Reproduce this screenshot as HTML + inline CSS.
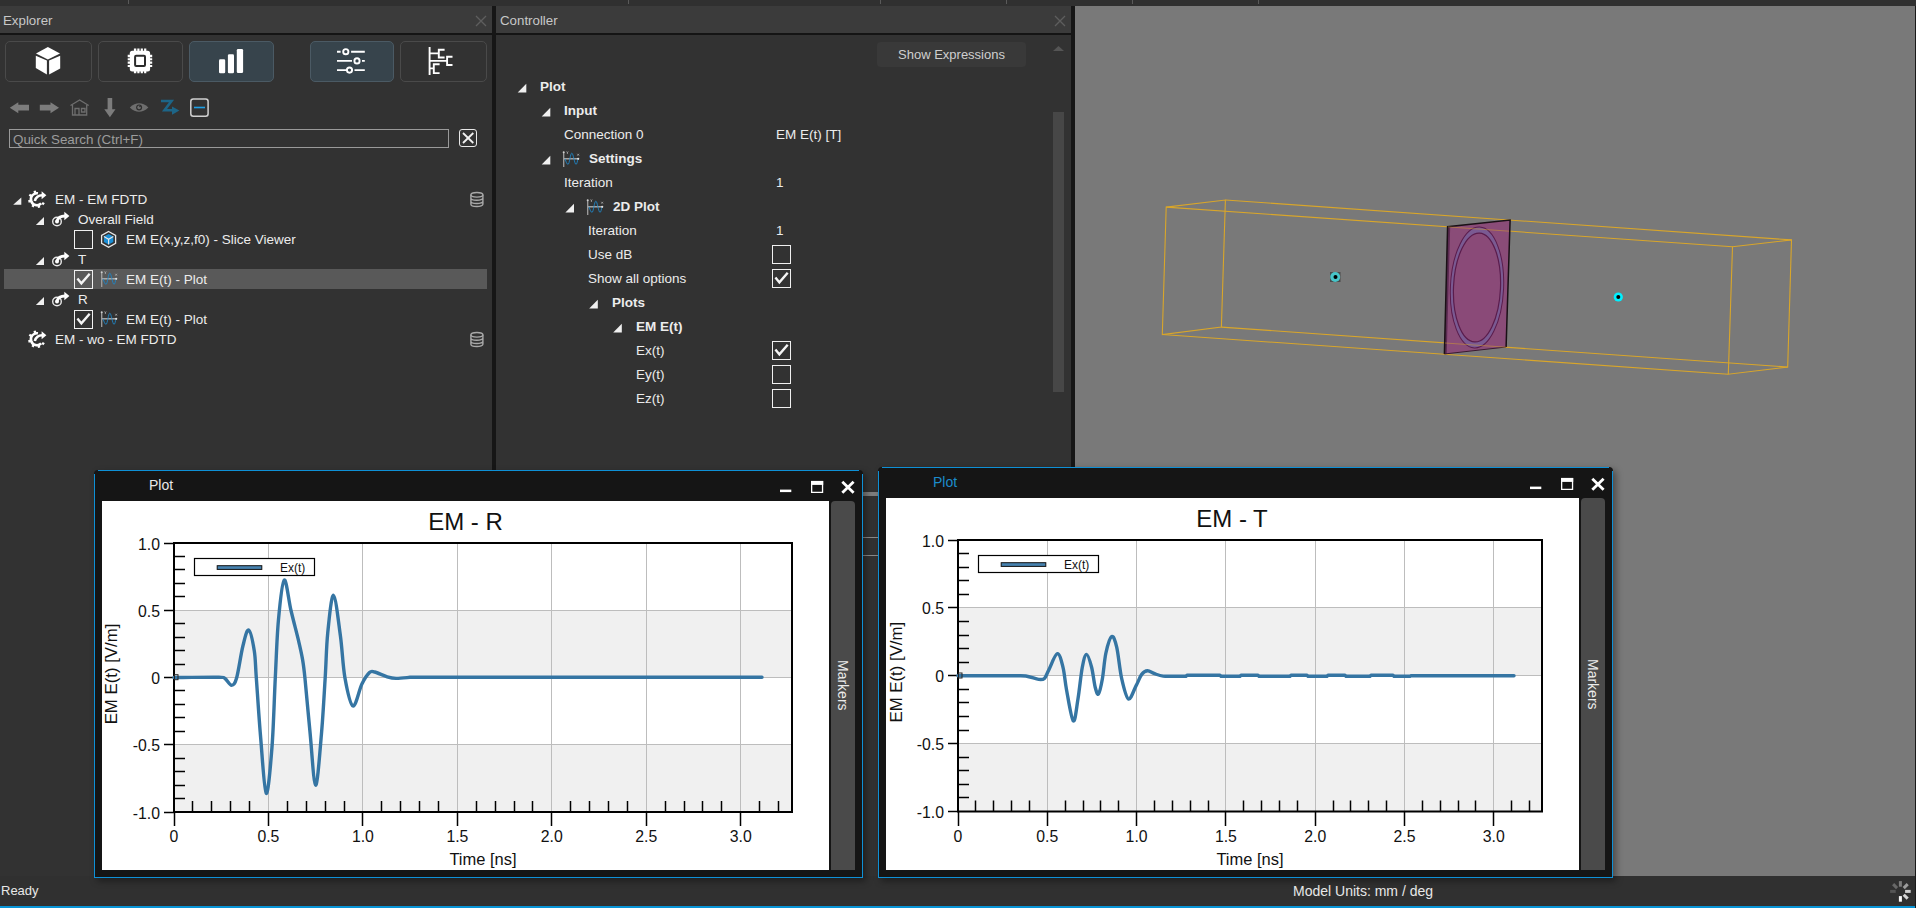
<!DOCTYPE html>
<html><head><meta charset="utf-8">
<style>
*{margin:0;padding:0;box-sizing:border-box}
html,body{width:1916px;height:908px;overflow:hidden;background:#323232;font-family:"Liberation Sans",sans-serif;color:#ececec;font-size:13px}
.a{position:absolute}
svg.a{display:block}
#top{left:0;top:0;width:1916px;height:6px;background:#303030}
.hdr{top:6px;height:27px;background:#3b3b3b;color:#c8c8c8;font-size:13.3px;line-height:30px}
.hline{top:33px;height:2px;background:#141414}
.sep{background:#161616}
.t{white-space:nowrap;line-height:20px;height:20px}
.tb{font-weight:bold}
.cb{width:19px;height:19px;border:1.5px solid #f0f0f0}
.btn{top:41px;height:41px;border:1px solid #4a4a4a;border-radius:5px}
.btn.sel{background:#37444c;border-color:#4b5a64}
#vp{left:1075px;top:6px;width:840px;height:870px;background:#797979}
#status{left:0;top:876px;width:1916px;height:30px;background:#303030}
#sline{left:0;top:906px;width:1916px;height:2px;background:#0894d6}
.win{background:#151515;border-radius:4px 4px 0 0;box-shadow:3px 3px 7px rgba(0,0,0,0.4)}
.bl{background:#0e90d6}
.mk{background:#4a4a4a;border-radius:4px 4px 0 0}
.ct{white-space:nowrap;line-height:24px;height:24px;font-size:13.5px}
</style></head><body>

<div class="a" id="top"></div>
<div class="a" style="left:128px;top:0;width:1px;height:4px;background:#5a5a5a"></div><div class="a" style="left:628px;top:0;width:1px;height:4px;background:#5a5a5a"></div><div class="a" style="left:880px;top:0;width:1px;height:4px;background:#5a5a5a"></div><div class="a" style="left:1006px;top:0;width:1px;height:4px;background:#5a5a5a"></div><div class="a" style="left:1132px;top:0;width:1px;height:4px;background:#5a5a5a"></div><div class="a" style="left:1258px;top:0;width:1px;height:4px;background:#5a5a5a"></div>
<div class="a" id="vp"></div>
<svg class="a" style="left:1075px;top:6px" width="840" height="470" viewBox="1075 6 840 470">
<g stroke="#d9a62a" stroke-width="1.1" fill="none">
<path d="M1166.2,207.1L1225.4,200L1221.4,327.1L1162.3,334.5Z"/>
<path d="M1732.5,246.8L1791.5,239.9L1787.7,367.1L1728.3,374.2Z"/>
<path d="M1166.2,207.1L1732.5,246.8M1225.4,200L1791.5,239.9M1221.4,327.1L1787.7,367.1M1162.3,334.5L1728.3,374.2"/>
</g>
<path d="M1447.6,226.7L1510.1,220L1506.1,347L1444.4,354Z" fill="#8a4a78" fill-opacity="0.97"/>
<path d="M1447.6,226.7L1450.2,226.7L1446.7,354L1444.4,354Z" fill="#5a2a50"/>
<g transform="rotate(2.5 1477 287.5)">
<ellipse cx="1477" cy="287.5" rx="26.6" ry="60.5" fill="#7a5a92" stroke="#5a1c4c" stroke-width="1"/>
<ellipse cx="1477" cy="287.5" rx="23.5" ry="54.5" fill="#8a4a78" stroke="#5a1c4c" stroke-width="1.2"/>
</g>
<path d="M1444.4,354L1447.6,226.7L1510.1,220L1506.1,347" fill="none" stroke="#1a1016" stroke-width="1.5"/>
<path d="M1444.4,354L1506.1,347" fill="none" stroke="#3a1a30" stroke-width="1"/>
<g stroke="#d9a62a" stroke-width="1" stroke-opacity="0.45" fill="none">
<path d="M1448,226.9L1509,231.2M1445,343L1506,347.2"/>
</g>
<rect x="1330" y="272" width="10.5" height="10" fill="#4a4a4a"/>
<circle cx="1335.2" cy="277" r="5" fill="#48c4c8"/>
<circle cx="1335.5" cy="277" r="2" fill="#000"/>
<circle cx="1618.3" cy="297" r="4.6" fill="#00f0ff"/>
<circle cx="1618.3" cy="297" r="2" fill="#000"/>
</svg>

<!-- Explorer -->
<div class="a hdr" style="left:0;width:492px;padding-left:3px">Explorer</div>
<div class="a hline" style="left:0;width:492px"></div>
<div class="a sep" style="left:492px;top:6px;width:4px;height:464px"></div>

<div class="a btn" style="left:5px;width:87px"></div>
<div class="a btn" style="left:98px;width:85px"></div>
<div class="a btn sel" style="left:189px;width:85px"></div>
<div class="a btn sel" style="left:310px;width:84px"></div>
<div class="a btn" style="left:400px;width:87px"></div>

<div class="a" style="left:9px;top:129px;width:440px;height:19px;border:1px solid #9a9a9a"></div>
<div class="a" style="left:13px;top:130px;font-size:13.4px;color:#9c9c9c;line-height:19px">Quick Search (Ctrl+F)</div>
<div class="a" style="left:459px;top:129px;width:18px;height:18px;border:1.5px solid #e8e8e8;border-radius:3px"></div>

<div class="a" style="left:4px;top:269px;width:483px;height:20px;background:#595959"></div>

<div class="a t" style="left:55px;top:190px;font-size:13.5px">EM - EM FDTD</div>
<div class="a t" style="left:78px;top:210px;font-size:13.5px">Overall Field</div>
<div class="a t" style="left:126px;top:230px;font-size:13.5px">EM E(x,y,z,f0) - Slice Viewer</div>
<div class="a t" style="left:78px;top:250px;font-size:13.5px">T</div>
<div class="a t" style="left:126px;top:270px;font-size:13.5px">EM E(t) - Plot</div>
<div class="a t" style="left:78px;top:290px;font-size:13.5px">R</div>
<div class="a t" style="left:126px;top:310px;font-size:13.5px">EM E(t) - Plot</div>
<div class="a t" style="left:55px;top:330px;font-size:13.5px">EM - wo - EM FDTD</div>

<div class="a cb" style="left:74px;top:230px"></div>
<div class="a cb" style="left:74px;top:270px"></div>
<div class="a cb" style="left:74px;top:310px"></div>

<!-- Controller -->
<div class="a hdr" style="left:496px;width:575px;padding-left:4px">Controller</div>
<div class="a hline" style="left:496px;width:575px"></div>
<div class="a sep" style="left:1071px;top:6px;width:4px;height:464px"></div>

<div class="a" style="left:877px;top:42px;width:149px;height:25px;background:#393939;border-radius:4px;color:#cfcfcf;font-size:13px;line-height:25px;text-align:center">Show Expressions</div>
<div class="a" style="left:1053px;top:112px;width:11px;height:280px;background:#474747"></div>

<div class="a ct tb" style="left:540px;top:75px">Plot</div>
<div class="a ct tb" style="left:564px;top:99px">Input</div>
<div class="a ct" style="left:564px;top:123px">Connection 0</div>
<div class="a ct" style="left:776px;top:123px">EM E(t) [T]</div>
<div class="a ct tb" style="left:589px;top:147px">Settings</div>
<div class="a ct" style="left:564px;top:171px">Iteration</div>
<div class="a ct" style="left:776px;top:171px">1</div>
<div class="a ct tb" style="left:613px;top:195px">2D Plot</div>
<div class="a ct" style="left:588px;top:219px">Iteration</div>
<div class="a ct" style="left:776px;top:219px">1</div>
<div class="a ct" style="left:588px;top:243px">Use dB</div>
<div class="a ct" style="left:588px;top:267px">Show all options</div>
<div class="a ct tb" style="left:612px;top:291px">Plots</div>
<div class="a ct tb" style="left:636px;top:315px">EM E(t)</div>
<div class="a ct" style="left:636px;top:339px">Ex(t)</div>
<div class="a ct" style="left:636px;top:363px">Ey(t)</div>
<div class="a ct" style="left:636px;top:387px">Ez(t)</div>
<div class="a cb" style="left:772px;top:245px"></div>
<div class="a cb" style="left:772px;top:269px"></div>
<div class="a cb" style="left:772px;top:341px"></div>
<div class="a cb" style="left:772px;top:365px"></div>
<div class="a cb" style="left:772px;top:389px"></div>

<svg class="a" style="left:0;top:0" width="1916" height="470" viewBox="0 0 1916 470">
<!-- header close X -->
<g stroke="#5e5e5e" stroke-width="1.3"><path d="M476,16L486,26M486,16L476,26"/><path d="M1055,16L1065,26M1065,16L1055,26"/></g>
<!-- cube -->
<g fill="#fff">
<path d="M47.9,47 L60,53.6 L47.9,59.4 L36,53.6Z"/>
<path d="M35.8,55.8 L46.9,60.4 L46.9,74.4 L35.8,68.1Z"/>
<path d="M49.1,60.4 L60.2,55.8 L60.2,68.6 L49.1,74.4Z"/>
</g>
<!-- chip -->
<g fill="#fff">
<rect x="129.8" y="50.7" width="20.3" height="20.8" rx="2.5"/>
<path d="M133.9,48.5h2.4v3h-2.4zM137.3,48.5h2.2v3h-2.2zM140.7,48.5h2.2v3h-2.2zM144.1,48.5h2.2v3h-2.2z"/>
<path d="M133.9,70.5h2.4v2.8h-2.4zM137.3,70.5h2.2v2.8h-2.2zM140.7,70.5h2.2v2.8h-2.2zM144.1,70.5h2.2v2.8h-2.2z"/>
<path d="M127.7,54.8h3v2.4h-3zM127.7,58.2h3v2.1h-3zM127.7,61.6h3v2.1h-3zM127.7,65h3v2.1h-3z"/>
<path d="M149.5,54.8h2.7v2.4h-2.7zM149.5,58.2h2.7v2.1h-2.7zM149.5,61.6h2.7v2.1h-2.7zM149.5,65h2.7v2.1h-2.7z"/>
</g>
<rect x="135.1" y="55.8" width="9.9" height="10.1" rx="1" fill="#fff" stroke="#2b2b2b" stroke-width="2"/>
<!-- bars -->
<g fill="#fff"><rect x="219" y="59.2" width="6.2" height="14" rx="1.3"/><rect x="227.9" y="54.2" width="6.1" height="19" rx="1.3"/><rect x="236.8" y="48.9" width="6.3" height="24.2" rx="1.3"/></g>
<!-- sliders -->
<g stroke="#fff" stroke-width="1.9" fill="none">
<path d="M337,51.7h3.6M351.1,51.7h13.7M337,60.9h15M362,60.9h2.8M337,70.1h10M354.5,70.1h10.3"/>
<circle cx="345.8" cy="51.7" r="2.6"/><circle cx="357" cy="60.9" r="2.6"/><circle cx="349.5" cy="70.1" r="2.6"/>
</g>
<!-- tree icon -->
<g stroke="#fff" stroke-width="1.9" fill="none">
<path d="M429.6,47V75.1M430,53.4h8.8M444.6,49.7h-5.8v7.8h5.8M430,60.9h17.1M452.5,56.7h-5.4v8.3h5.4M430,68.4h3.8M439.6,64.2h-5.8v8.9h5.8"/>
</g>
<!-- nav icons -->
<g fill="#7c7c7c">
<path d="M9.8,107.7L18.3,102.2V104.8H29V110.5H18.3V113.3Z"/>
<path d="M59,107.7L50.5,102.2V104.8H39.8V110.5H50.5V113.3Z"/>
<path d="M107.6,98H112.2V109.3H115.5L109.9,117.2L104.3,109.3H107.6Z"/>
</g>
<g fill="none" stroke="#6e6e6e" stroke-width="1.3">
<path d="M70.5,105.5L79.6,100L88.7,105.5M72.5,105V115H86.7V105"/>
<path d="M75,115V108.5H79V115M81.5,108.5H85V112H81.5Z"/>
</g>
<path d="M129.8,107.4Q139,99 148.4,107.4Q139,116 129.8,107.4Z" fill="#6e6e6e"/>
<circle cx="139.1" cy="107.4" r="3" fill="#2e2e2e"/><circle cx="139.1" cy="107.4" r="1.8" fill="#6e6e6e"/><circle cx="140" cy="106.4" r="0.8" fill="#2e2e2e"/>
<path d="M161,101H171.5L164.5,110.3H172.5" fill="none" stroke="#1d6587" stroke-width="2.6"/>
<path d="M172,106.5L179.4,110.6L172,114.8Z" fill="#1d6587"/>
<rect x="190.8" y="99" width="17.3" height="17.2" rx="2.5" fill="none" stroke="#d0d0d0" stroke-width="1.5"/>
<path d="M194,107.5H205" stroke="#1ea0e6" stroke-width="1.6"/>
<!-- clear X -->
<path d="M463,133L473.3,143M473.3,133L463,143" stroke="#f0f0f0" stroke-width="1.8"/>
<!-- tree triangles -->
<g fill="#f0f0f0">
<path d="M13.2,204.8H21.3V197.5Z"/>
<path d="M35.9,225H44V216.9Z"/>
<path d="M35.9,265H44V256.9Z"/>
<path d="M35.9,305H44V296.9Z"/>
</g>
<!-- gear-arrow icons -->
<g id="gearA">
<path d="M37.94,193.29A6,6 0 1 0 41.14,203.44" fill="none" stroke="#fff" stroke-width="2.6"/>
<g fill="#fff"><rect x="33.73" y="190.66" width="2.4" height="2.4" transform="rotate(-105 34.93 191.86)"/><rect x="29.12" y="194.20" width="2.4" height="2.4" transform="rotate(-150 30.32 195.40)"/><rect x="28.36" y="199.97" width="2.4" height="2.4" transform="rotate(165 29.56 201.17)"/><rect x="31.90" y="204.58" width="2.4" height="2.4" transform="rotate(120 33.10 205.78)"/><rect x="37.67" y="205.34" width="2.4" height="2.4" transform="rotate(75 38.87 206.54)"/><rect x="41.93" y="202.36" width="2.4" height="2.4" transform="rotate(35 43.13 203.56)"/></g>
<path d="M34.8,201 Q36.5,195.2 42.3,195.3" fill="none" stroke="#fff" stroke-width="2.6"/>
<path d="M41.6,191.3L46.4,195.3L41.6,199.2Z" fill="#fff"/>
</g>
<use href="#gearA" y="140"/>
<!-- link icons -->
<g id="linkA">
<circle cx="57" cy="221.5" r="4.3" fill="none" stroke="#e8e8e8" stroke-width="1.4"/>
<circle cx="57" cy="221.5" r="2" fill="#fff"/>
<path d="M57,221 Q58.5,216.2 65,216" fill="none" stroke="#fff" stroke-width="2.8"/>
<path d="M64.3,211.8L69.4,216L64.3,220.2Z" fill="#fff"/>
</g>
<use href="#linkA" y="40"/>
<use href="#linkA" y="80"/>
<!-- slice cube icon -->
<path d="M108.6,231.5L115.6,235.4V243.3L108.6,247.2L101.6,243.3V235.4Z" fill="none" stroke="#e8e8e8" stroke-width="1.3"/>
<path d="M108.6,234L113.3,236.6V242L108.6,244.6L103.9,242V236.6Z" fill="#1b8fd6"/>
<path d="M103.9,236.6L108.6,239.3L113.3,236.6M108.6,239.3V244.6" fill="none" stroke="#e8e8e8" stroke-width="1.1"/>
<!-- check marks -->
<g fill="none" stroke="#f4f4f4" stroke-width="2.4" stroke-linejoin="miter">
<path d="M77.4,278.4L81.4,283.4L89.7,273.8"/>
<path d="M77.4,318.4L81.4,323.4L89.7,313.8"/>
<path d="M775.4,277.4L779.4,282.4L787.7,272.8"/>
<path d="M775.4,349.4L779.4,354.4L787.7,344.8"/>
</g>
<!-- plot icons -->
<g id="plotA">
<path d="M101.7,272V287" stroke="#a0a0a0" stroke-width="1.3"/>
<path d="M102,278.8H116.2" stroke="#b8b8b8" stroke-width="1.3"/>
<path d="M103.1,278.8 C104,282 105,284.4 106,284.4 C107.5,284.4 108.3,273.1 109.8,273.1 C111.3,273.1 112.5,284.4 114,284.4 C115,284.4 115.5,281 115.8,278.8" fill="none" stroke="#1f86c6" stroke-width="0.9"/>
<circle cx="101.7" cy="272.3" r="1" fill="#d0d0d0"/><circle cx="116.2" cy="278.8" r="1.1" fill="#e0e0e0"/>
<path d="M104.6,271.5L105.4,272.7L106.2,271.5M105.4,272.7V274" stroke="#bdbdbd" stroke-width="0.7" fill="none"/>
<path d="M115.3,273.8L117,275.6M117,273.8L115.3,275.6" stroke="#bdbdbd" stroke-width="0.7"/>
</g>
<use href="#plotA" y="40"/>
<use href="#plotA" x="462" y="-120"/>
<use href="#plotA" x="486" y="-72"/>
<!-- db icons -->
<g id="dbA" fill="none" stroke="#a9a9a9" stroke-width="1.4">
<ellipse cx="476.9" cy="194.8" rx="6" ry="2.3"/>
<path d="M470.9,194.8V204.2A6,2.3 0 0 0 482.9,204.2V194.8M470.9,198A6,2.3 0 0 0 482.9,198M470.9,201.2A6,2.3 0 0 0 482.9,201.2"/>
</g>
<use href="#dbA" y="140"/>
<!-- controller triangles -->
<g fill="#f0f0f0">
<path d="M517.7,92.4H526.3V83.8Z"/>
<path d="M541.7,116.4H550.3V107.8Z"/>
<path d="M541.7,164.4H550.3V155.8Z"/>
<path d="M565.4,212.4H574V203.8Z"/>
<path d="M589.2,308.4H597.8V299.8Z"/>
<path d="M613.2,332.4H621.8V323.8Z"/>
</g>
<!-- scroll up arrow -->
<path d="M1053,51L1058.5,46L1064,51Z" fill="#555"/>
</svg>

<div class="a" style="left:863px;top:492px;width:15px;height:4px;background:#7e7e7e"></div>
<div class="a" style="left:863px;top:537px;width:15px;height:1px;background:#8a8a8a"></div>
<div class="a" style="left:863px;top:555px;width:15px;height:1px;background:#8a8a8a"></div>
<div class="a" id="status"></div>
<div class="a" id="sline"></div>
<svg class="a" style="left:1880px;top:876px" width="36" height="30" viewBox="1880 876 36 30">
<g transform="translate(1900.4 891.4)">
<rect x="-1.5" y="-10.3" width="3" height="5.6" fill="#7c7c7c" transform="rotate(0)"/>
<rect x="-1.5" y="-10.3" width="3" height="5.6" fill="#9c9c9c" transform="rotate(45)"/>
<rect x="-1.5" y="-10.3" width="3" height="5.6" fill="#d0d0d0" transform="rotate(90)"/>
<rect x="-1.5" y="-10.3" width="3" height="5.6" fill="#d6d6d6" transform="rotate(135)"/>
<rect x="-1.5" y="-10.3" width="3" height="5.6" fill="#fafafa" transform="rotate(180)"/>
<rect x="-1.5" y="-10.3" width="3" height="5.6" fill="#555" transform="rotate(270)"/>
<rect x="-1.5" y="-10.3" width="3" height="5.6" fill="#686868" transform="rotate(315)"/>
</g></svg>
<div class="a" style="left:1915px;top:6px;width:1px;height:902px;background:#1a1a1a"></div>
<div class="a" style="left:1px;top:882px;font-size:13px;color:#e8e8e8;line-height:18px">Ready</div>
<div class="a" style="left:1293px;top:882px;font-size:14px;color:#e8e8e8;line-height:18px">Model Units: mm / deg</div>

<div class="a win" style="left:94px;top:470px;width:769px;height:408px"></div>
<div class="a bl" style="left:98px;top:470px;width:761px;height:1px"></div>
<div class="a bl" style="left:94px;top:474px;width:1px;height:404px"></div>
<div class="a bl" style="left:862px;top:474px;width:1px;height:404px"></div>
<div class="a bl" style="left:94px;top:877px;width:769px;height:1px"></div>
<div class="a" style="left:149px;top:477px;font-size:14px;color:#e8e8e8;line-height:16px">Plot</div>
<svg class="a" style="left:780px;top:470px" width="40" height="30" viewBox="0 0 40 30"><g fill="#fff"><rect x="0" y="19.6" width="11.3" height="2.5"/></g></svg>
<svg class="a" style="left:811px;top:470px" width="60" height="30" viewBox="0 0 60 30"><path d="M0.65,11.55H11.55V22.45H0.65Z" fill="none" stroke="#fff" stroke-width="1.3"/><rect x="0" y="10.9" width="12.2" height="4" fill="#fff"/><path d="M31.3,11.7L42.6,22.7M42.6,11.7L31.3,22.7" stroke="#fff" stroke-width="2.8"/></svg>
<svg class="a" style="left:102px;top:501px" width="727" height="369" viewBox="102 501 727 369">
<rect x="102" y="501" width="727" height="369" fill="#fff"/>
<rect x="174.0" y="610.2" width="618.0" height="67.2" fill="#f0f0f0"/>
<rect x="174.0" y="744.8" width="618.0" height="67.2" fill="#f0f0f0"/>
<path d="M174.0,610.5H792.0M174.0,677.5H792.0M174.0,744.5H792.0M268.5,543.0V812.0M362.5,543.0V812.0M457.5,543.0V812.0M551.5,543.0V812.0M646.5,543.0V812.0M740.5,543.0V812.0" stroke="#bdbdbd" stroke-width="1" fill="none"/>
<path d="M164.0,812.5H174.0M174.0,798.5H185.0M174.0,785.5H185.0M174.0,771.5H185.0M174.0,758.5H185.0M164.0,744.5H174.0M174.0,731.5H185.0M174.0,717.5H185.0M174.0,704.5H185.0M174.0,690.5H185.0M164.0,677.5H174.0M174.0,664.5H185.0M174.0,650.5H185.0M174.0,637.5H185.0M174.0,623.5H185.0M164.0,610.5H174.0M174.0,596.5H185.0M174.0,583.5H185.0M174.0,569.5H185.0M174.0,556.5H185.0M164.0,543.5H174.0M174.5,812.0V826.0M192.5,801.0V812.0M211.5,801.0V812.0M230.5,801.0V812.0M249.5,801.0V812.0M268.5,812.0V826.0M287.5,801.0V812.0M306.5,801.0V812.0M325.5,801.0V812.0M344.5,801.0V812.0M362.5,812.0V826.0M381.5,801.0V812.0M400.5,801.0V812.0M419.5,801.0V812.0M438.5,801.0V812.0M457.5,812.0V826.0M476.5,801.0V812.0M495.5,801.0V812.0M514.5,801.0V812.0M532.5,801.0V812.0M551.5,812.0V826.0M570.5,801.0V812.0M589.5,801.0V812.0M608.5,801.0V812.0M627.5,801.0V812.0M646.5,812.0V826.0M665.5,801.0V812.0M684.5,801.0V812.0M702.5,801.0V812.0M721.5,801.0V812.0M740.5,812.0V826.0M759.5,801.0V812.0M778.5,801.0V812.0" stroke="#000" stroke-width="1.5" fill="none"/>
<rect x="174.0" y="543.0" width="618.0" height="269.0" stroke="#000" stroke-width="2" fill="none"/>
<g font-family="Liberation Sans" font-size="15.8" fill="#111"><text x="160.0" y="549.5" text-anchor="end">1.0</text><text x="160.0" y="616.8" text-anchor="end">0.5</text><text x="160.0" y="684.0" text-anchor="end">0</text><text x="160.0" y="751.2" text-anchor="end">-0.5</text><text x="160.0" y="818.5" text-anchor="end">-1.0</text><text x="174.0" y="842.2" text-anchor="middle">0</text><text x="268.4" y="842.2" text-anchor="middle">0.5</text><text x="362.9" y="842.2" text-anchor="middle">1.0</text><text x="457.4" y="842.2" text-anchor="middle">1.5</text><text x="551.8" y="842.2" text-anchor="middle">2.0</text><text x="646.2" y="842.2" text-anchor="middle">2.5</text><text x="740.7" y="842.2" text-anchor="middle">3.0</text></g>
<text x="483.0" y="865.0" text-anchor="middle" font-family="Liberation Sans" font-size="16.5" fill="#111">Time [ns]</text>
<text transform="translate(117.0,674.0) rotate(-90)" text-anchor="middle" font-family="Liberation Sans" font-size="16.8" fill="#111">EM E(t) [V/m]</text>
<text x="465.5" y="530.0" text-anchor="middle" font-family="Liberation Sans" font-size="24" fill="#111">EM - R</text>
<path d="M174.00,677.50 C175.33,677.50 174.52,677.53 182.00,677.50 C189.48,677.47 211.73,677.13 218.90,677.30 C226.07,677.47 222.90,677.18 225.00,678.50 C227.10,679.82 229.57,685.28 231.50,685.20 C233.43,685.12 234.70,684.53 236.60,678.00 C238.50,671.47 240.88,654.00 242.90,646.00 C244.92,638.00 246.80,629.17 248.70,630.00 C250.60,630.83 253.03,643.07 254.30,651.00 C255.57,658.93 255.25,663.27 256.30,677.60 C257.35,691.93 258.95,717.72 260.60,737.00 C262.25,756.28 264.30,791.63 266.20,793.30 C268.10,794.97 270.48,766.28 272.00,747.00 C273.52,727.72 274.23,698.67 275.30,677.60 C276.37,656.53 276.92,636.85 278.40,620.60 C279.88,604.35 282.10,581.78 284.20,580.10 C286.30,578.42 288.60,600.37 291.00,610.50 C293.40,620.63 296.70,632.88 298.60,640.90 C300.50,648.92 301.35,652.48 302.40,658.60 C303.45,664.72 303.63,665.37 304.90,677.60 C306.17,689.83 308.22,714.07 310.00,732.00 C311.78,749.93 313.70,784.77 315.60,785.20 C317.50,785.63 319.80,752.53 321.40,734.60 C323.00,716.67 324.15,694.48 325.20,677.60 C326.25,660.72 326.32,647.02 327.70,633.30 C329.08,619.58 331.38,594.88 333.50,595.30 C335.62,595.72 338.50,622.08 340.40,635.80 C342.30,649.52 342.80,665.90 344.90,677.60 C347.00,689.30 350.17,704.93 353.00,706.00 C355.83,707.07 359.15,689.58 361.90,684.00 C364.65,678.42 367.38,674.50 369.50,672.50 C371.62,670.50 371.65,671.28 374.60,672.00 C377.55,672.72 383.62,675.73 387.20,676.80 C390.78,677.87 392.30,678.32 396.10,678.40 C399.90,678.48 407.68,677.48 410.00,677.30 L762.0,677.3" stroke="#3575a3" stroke-width="3.4" fill="none" stroke-linejoin="round" stroke-linecap="round"/>
<rect x="174.5" y="674.7" width="3.5" height="5" fill="none" stroke="#222" stroke-width="1"/>
<rect x="194.5" y="558.5" width="120.0" height="17.0" fill="#fff" stroke="#000" stroke-width="1.2"/>
<rect x="217.2" y="565.7" width="44.6" height="3.7" fill="#4682b0" stroke="#111" stroke-width="1"/>
<text x="280.0" y="572.0" font-family="Liberation Sans" font-size="12" fill="#111">Ex(t)</text>
</svg>
<div class="a mk" style="left:831px;top:501px;width:24px;height:369px"></div>
<div class="a" style="left:833px;top:660px;width:18px;height:60px;color:#ececec;font-size:14px;writing-mode:vertical-rl">Markers</div>
<div class="a win" style="left:878px;top:467px;width:735px;height:411px"></div>
<div class="a bl" style="left:882px;top:467px;width:727px;height:1px"></div>
<div class="a bl" style="left:878px;top:471px;width:1px;height:407px"></div>
<div class="a bl" style="left:1612px;top:471px;width:1px;height:407px"></div>
<div class="a bl" style="left:878px;top:877px;width:735px;height:1px"></div>
<div class="a" style="left:933px;top:474px;font-size:14px;color:#1c8ccc;line-height:16px">Plot</div>
<svg class="a" style="left:1530px;top:467px" width="40" height="30" viewBox="0 0 40 30"><g fill="#fff"><rect x="0" y="19.6" width="11.3" height="2.5"/></g></svg>
<svg class="a" style="left:1561px;top:467px" width="60" height="30" viewBox="0 0 60 30"><path d="M0.65,11.55H11.55V22.45H0.65Z" fill="none" stroke="#fff" stroke-width="1.3"/><rect x="0" y="10.9" width="12.2" height="4" fill="#fff"/><path d="M31.3,11.7L42.6,22.7M42.6,11.7L31.3,22.7" stroke="#fff" stroke-width="2.8"/></svg>
<svg class="a" style="left:886px;top:498px" width="693" height="372" viewBox="886 498 693 372">
<rect x="886" y="498" width="693" height="372" fill="#fff"/>
<rect x="958.0" y="607.9" width="584.0" height="67.9" fill="#f0f0f0"/>
<rect x="958.0" y="743.6" width="584.0" height="67.9" fill="#f0f0f0"/>
<path d="M958.0,607.5H1542.0M958.0,675.5H1542.0M958.0,743.5H1542.0M1047.5,540.0V811.5M1136.5,540.0V811.5M1225.5,540.0V811.5M1315.5,540.0V811.5M1404.5,540.0V811.5M1493.5,540.0V811.5" stroke="#bdbdbd" stroke-width="1" fill="none"/>
<path d="M948.0,811.5H958.0M958.0,797.5H969.0M958.0,784.5H969.0M958.0,770.5H969.0M958.0,757.5H969.0M948.0,743.5H958.0M958.0,730.5H969.0M958.0,716.5H969.0M958.0,702.5H969.0M958.0,689.5H969.0M948.0,675.5H958.0M958.0,662.5H969.0M958.0,648.5H969.0M958.0,635.5H969.0M958.0,621.5H969.0M948.0,607.5H958.0M958.0,594.5H969.0M958.0,580.5H969.0M958.0,567.5H969.0M958.0,553.5H969.0M948.0,540.5H958.0M958.5,811.5V826.0M975.5,800.5V811.5M993.5,800.5V811.5M1011.5,800.5V811.5M1029.5,800.5V811.5M1047.5,811.5V826.0M1065.5,800.5V811.5M1083.5,800.5V811.5M1100.5,800.5V811.5M1118.5,800.5V811.5M1136.5,811.5V826.0M1154.5,800.5V811.5M1172.5,800.5V811.5M1190.5,800.5V811.5M1208.5,800.5V811.5M1225.5,811.5V826.0M1243.5,800.5V811.5M1261.5,800.5V811.5M1279.5,800.5V811.5M1297.5,800.5V811.5M1315.5,811.5V826.0M1333.5,800.5V811.5M1350.5,800.5V811.5M1368.5,800.5V811.5M1386.5,800.5V811.5M1404.5,811.5V826.0M1422.5,800.5V811.5M1440.5,800.5V811.5M1458.5,800.5V811.5M1475.5,800.5V811.5M1493.5,811.5V826.0M1511.5,800.5V811.5M1529.5,800.5V811.5" stroke="#000" stroke-width="1.5" fill="none"/>
<rect x="958.0" y="540.0" width="584.0" height="271.5" stroke="#000" stroke-width="2" fill="none"/>
<g font-family="Liberation Sans" font-size="15.8" fill="#111"><text x="944.0" y="546.5" text-anchor="end">1.0</text><text x="944.0" y="614.4" text-anchor="end">0.5</text><text x="944.0" y="682.2" text-anchor="end">0</text><text x="944.0" y="750.1" text-anchor="end">-0.5</text><text x="944.0" y="818.0" text-anchor="end">-1.0</text><text x="958.0" y="842.2" text-anchor="middle">0</text><text x="1047.3" y="842.2" text-anchor="middle">0.5</text><text x="1136.6" y="842.2" text-anchor="middle">1.0</text><text x="1225.9" y="842.2" text-anchor="middle">1.5</text><text x="1315.2" y="842.2" text-anchor="middle">2.0</text><text x="1404.5" y="842.2" text-anchor="middle">2.5</text><text x="1493.8" y="842.2" text-anchor="middle">3.0</text></g>
<text x="1250.0" y="864.5" text-anchor="middle" font-family="Liberation Sans" font-size="16.5" fill="#111">Time [ns]</text>
<text transform="translate(902.0,672.2) rotate(-90)" text-anchor="middle" font-family="Liberation Sans" font-size="16.8" fill="#111">EM E(t) [V/m]</text>
<text x="1232.0" y="527.0" text-anchor="middle" font-family="Liberation Sans" font-size="24" fill="#111">EM - T</text>
<path d="M958.00,675.75 C959.33,675.75 957.08,675.74 966.00,675.75 C974.92,675.76 1001.53,675.76 1011.50,675.80 C1021.47,675.84 1021.27,675.40 1025.80,676.00 C1030.33,676.60 1035.60,679.00 1038.70,679.40 C1041.80,679.80 1042.73,679.95 1044.40,678.40 C1046.07,676.85 1046.55,674.22 1048.70,670.10 C1050.85,665.98 1054.92,654.17 1057.30,653.70 C1059.68,653.23 1061.45,661.22 1063.00,667.30 C1064.55,673.38 1064.88,681.25 1066.60,690.20 C1068.32,699.15 1071.40,719.57 1073.30,721.00 C1075.20,722.43 1076.50,707.75 1078.00,698.80 C1079.50,689.85 1080.87,674.70 1082.30,667.30 C1083.73,659.90 1085.05,654.40 1086.60,654.40 C1088.15,654.40 1090.17,661.82 1091.60,667.30 C1093.03,672.78 1094.05,682.88 1095.20,687.30 C1096.35,691.72 1097.30,695.23 1098.50,693.80 C1099.70,692.37 1101.17,685.50 1102.40,678.70 C1103.63,671.90 1104.35,660.03 1105.90,653.00 C1107.45,645.97 1109.90,637.47 1111.70,636.50 C1113.50,635.53 1115.03,640.17 1116.70,647.20 C1118.37,654.23 1119.75,670.07 1121.70,678.70 C1123.65,687.33 1126.02,697.80 1128.40,699.00 C1130.78,700.20 1133.78,690.00 1136.00,685.90 C1138.22,681.80 1139.78,676.92 1141.70,674.40 C1143.62,671.88 1145.35,670.92 1147.50,670.80 C1149.65,670.68 1151.98,672.82 1154.60,673.70 C1157.22,674.58 1159.80,675.68 1163.20,676.10 C1166.60,676.52 1173.03,676.18 1175.00,676.20 L1186.0,676.3 L1187.0,675.3 L1220.0,675.3 L1221.0,676.3 L1240.0,676.3 L1241.0,675.3 L1258.0,675.3 L1259.0,676.3 L1290.0,676.3 L1291.0,675.3 L1307.0,675.3 L1308.0,676.3 L1327.0,676.3 L1328.0,675.3 L1345.0,675.3 L1346.0,676.3 L1370.0,676.3 L1371.0,675.3 L1393.0,675.3 L1394.0,676.3 L1410.0,676.3 L1411.0,675.6 L1514.0,675.8" stroke="#3575a3" stroke-width="3.4" fill="none" stroke-linejoin="round" stroke-linecap="round"/>
<rect x="958.5" y="673.0" width="3.5" height="5" fill="none" stroke="#222" stroke-width="1"/>
<rect x="978.5" y="555.5" width="120.0" height="17.0" fill="#fff" stroke="#000" stroke-width="1.2"/>
<rect x="1001.2" y="562.7" width="44.6" height="3.7" fill="#4682b0" stroke="#111" stroke-width="1"/>
<text x="1064.0" y="569.0" font-family="Liberation Sans" font-size="12" fill="#111">Ex(t)</text>
</svg>
<div class="a mk" style="left:1581px;top:498px;width:24px;height:372px"></div>
<div class="a" style="left:1583px;top:659px;width:18px;height:60px;color:#ececec;font-size:14px;writing-mode:vertical-rl">Markers</div>
</body></html>
